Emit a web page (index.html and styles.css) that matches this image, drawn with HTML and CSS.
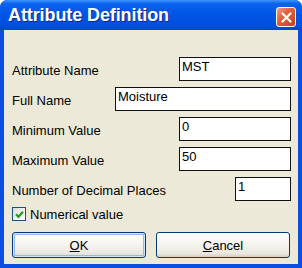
FILE: index.html
```html
<!DOCTYPE html>
<html lang="en">
<head>
    <meta charset="UTF-8">
    <title>Attribute Definition</title>
    <link rel="stylesheet" href="styles.css">
</head>
<body>
    <main class="window">
        <header class="title-bar">
            <h1 class="title">Attribute Definition</h1>
            <button class="close-btn" aria-label="Close">
                <svg width="13" height="13" viewBox="0 0 13 13">
                    <path d="M2.5 2.5 L10.5 10.5 M10.5 2.5 L2.5 10.5" stroke="#fff" stroke-width="2.2" stroke-linecap="round"/>
                </svg>
            </button>
        </header>
        <form class="dialog">
            <div class="row">
                <label for="attr-name">Attribute Name</label>
                <input type="text" id="attr-name" class="field field-mid" value="MST">
            </div>
            <div class="row">
                <label for="full-name">Full Name</label>
                <input type="text" id="full-name" class="field field-wide" value="Moisture">
            </div>
            <div class="row">
                <label for="min-value">Minimum Value</label>
                <input type="text" id="min-value" class="field field-mid" value="0">
            </div>
            <div class="row">
                <label for="max-value">Maximum Value</label>
                <input type="text" id="max-value" class="field field-mid" value="50">
            </div>
            <div class="row">
                <label for="decimals">Number of Decimal Places</label>
                <input type="text" id="decimals" class="field field-small" value="1">
            </div>
            <div class="check-row">
                <span class="checkbox">
                    <svg width="9" height="9" viewBox="0 0 9 9">
                        <path d="M1 4.2 L3.5 6.8 L8 1.8" fill="none" stroke="#21a121" stroke-width="2.2"/>
                    </svg>
                </span>
                <span class="check-label">Numerical value</span>
            </div>
            <div class="buttons">
                <button type="submit" class="btn btn-default"><u>O</u>K</button>
                <button type="button" class="btn"><u>C</u>ancel</button>
            </div>
        </form>
    </main>
</body>
</html>
```

FILE: styles.css
```css
body {
    margin: 0;
    padding: 0;
    background: #fff;
    font-family: "Liberation Sans", Arial, sans-serif;
}

.window {
    width: 302px;
    height: 268px;
    box-sizing: border-box;
    background: #0a4fe0;
    border-radius: 7px 7px 0 0;
    padding: 0 4px 4px 4px;
    display: flex;
    flex-direction: column;
    overflow: hidden;
}

.title-bar {
    height: 30px;
    margin: 0 -4px;
    padding: 0 6px 0 8px;
    display: flex;
    align-items: center;
    justify-content: space-between;
    background: linear-gradient(#3d95ff 0, #0a63f0 12%, #0055e6 45%, #0050e0 80%, #0046d4 100%);
    border-radius: 7px 7px 0 0;
}

.title {
    margin: 0;
    padding-top: 1px;
    color: #fff;
    font-size: 18px;
    font-weight: bold;
    letter-spacing: -0.1px;
    text-shadow: 1px 1px 0 #0a2a8a;
}

.close-btn {
    width: 20px;
    height: 20px;
    margin-top: 4px;
    padding: 0;
    border: 1px solid #fff;
    border-radius: 3px;
    background: linear-gradient(135deg, #f0a088 0%, #e0623c 40%, #c8401a 100%);
    display: flex;
    align-items: center;
    justify-content: center;
}

.dialog {
    flex: 1;
    background: #ece9d8;
    padding: 27px 7px 0 8px;
    display: flex;
    flex-direction: column;
}

.row {
    display: flex;
    justify-content: space-between;
    align-items: center;
    height: 24px;
    margin-bottom: 6px;
}

label, .check-label {
    font-size: 13px;
    color: #000;
    padding-top: 3px;
}

.field {
    box-sizing: border-box;
    height: 24px;
    border: 1px solid #111;
    background: #fff;
    font-family: "Liberation Sans", Arial, sans-serif;
    font-size: 13px;
    padding: 0 1px 6px 2px;
    margin: 0;
    outline: none;
}

.field-mid {
    width: 112px;
}

.field-wide {
    width: 176px;
}

.field-small {
    width: 56px;
}

.check-row {
    display: flex;
    align-items: center;
    gap: 4px;
    margin-top: -2px;
    height: 18px;
}

.check-row .check-label {
    padding-top: 0;
}

.checkbox {
    box-sizing: border-box;
    width: 14px;
    height: 14px;
    border: 1px solid #1c5180;
    background: linear-gradient(135deg, #dcdcd7 0%, #f5f4ef 60%, #ffffff 100%);
    display: flex;
    align-items: center;
    justify-content: center;
}

.buttons {
    display: flex;
    gap: 10px;
    margin-top: 9px;
    padding-left: 0;
}

.btn {
    box-sizing: border-box;
    width: 134px;
    height: 26px;
    border: 1px solid #003c74;
    border-radius: 3px;
    background: linear-gradient(#ffffff 0%, #f4f3ee 50%, #e9e7df 85%, #d6d0c5 100%);
    font-family: "Liberation Sans", Arial, sans-serif;
    font-size: 13px;
    color: #000;
    padding: 0;
}

.btn u {
    text-decoration-thickness: 1px;
}

.btn-default {
    box-shadow: inset 0 0 0 1px #cee7ff, inset 0 0 0 2px #98b8ea;
}
```
